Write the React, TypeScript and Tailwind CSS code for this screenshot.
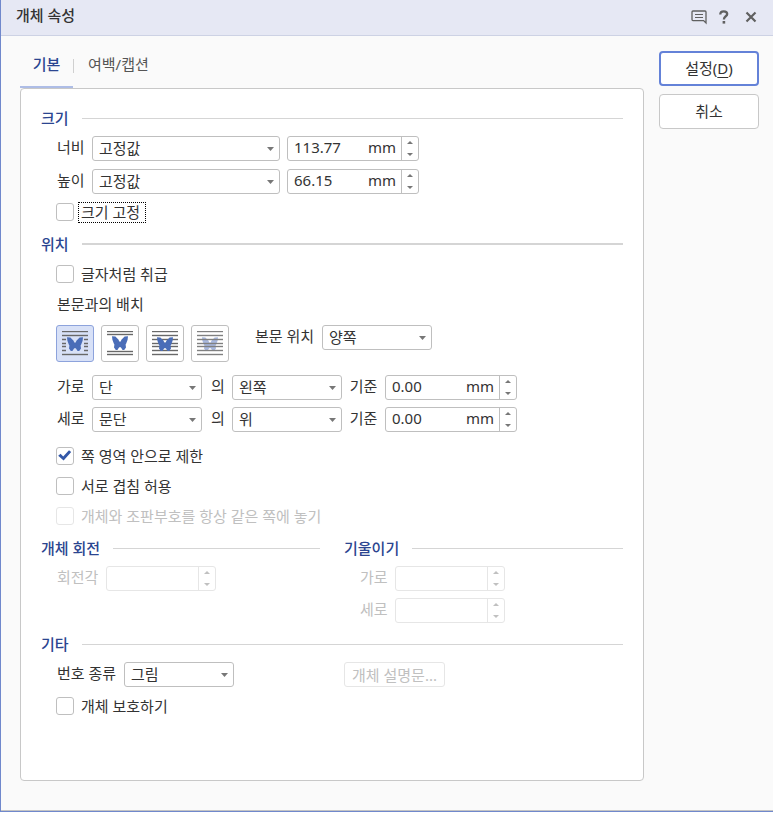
/**
 * App.tsx
 * --------------------------------------------------
 * 개체 속성 대화 상자 (기본 탭)
 */
import { useId, useState } from 'react';
import type { ReactNode } from 'react';
import clsx from 'clsx';

const WRAP_MODES = ['어울림', '자리 차지', '글 앞으로', '글 뒤로'];

function SectionTitle({ children, thick }: { children: ReactNode; thick?: boolean }) {
  return (
    <div className="flex items-center gap-[13px] h-5">
      <h2 className="font-medium text-[#2b4590] whitespace-nowrap">{children}</h2>
      <div className={clsx('flex-1 bg-[#d5d5d5]', thick ? 'h-0.5' : 'h-px')} />
    </div>
  );
}

function Row({ children }: { children: ReactNode }) {
  return <div className="flex items-start pl-4 leading-[23px]">{children}</div>;
}

function SelectBox({ id, value, label, className }: { id?: string; value: string; label?: string; className: string }) {
  return (
    <div className={clsx('relative h-[25px]', className)}>
      <select
        id={id}
        aria-label={label}
        className="w-full h-full appearance-none bg-white border border-[#bfbfbf] rounded-[3px] pl-1.5 pr-5 pb-px leading-[22px] outline-none"
      >
        <option>{value}</option>
      </select>
      <svg className="absolute right-[6px] top-[11px] pointer-events-none" width="7" height="4" viewBox="0 0 7 4">
        <path d="M0 0h7L3.5 4z" fill="#777" />
      </svg>
    </div>
  );
}

interface SpinBoxProps {
  id?: string;
  label?: string;
  value?: string;
  disabled?: boolean;
  className: string;
}

function SpinBox({ id, label, value = '', disabled, className }: SpinBoxProps) {
  const [text, setText] = useState(value);
  const step = (n: number) => setText((Number(text) + n).toFixed(2));

  return (
    <div
      className={clsx(
        'flex h-[25px] bg-white border rounded-[3px]',
        disabled ? 'border-[#e6e6e6] text-[#c0c0c0]' : 'border-[#bfbfbf] text-[#777]',
        className,
      )}
    >
      <input
        id={id}
        aria-label={label}
        type="text"
        value={text}
        disabled={disabled}
        onChange={(e) => setText(e.target.value)}
        className="flex-1 min-w-0 pl-1.5 pb-0.5 text-[#333] bg-transparent outline-none"
      />
      {!disabled && <span className="pr-[5px] leading-[21px] text-[#333]">mm</span>}
      <div className={clsx('flex flex-col w-[17px] border-l', disabled ? 'border-[#e6e6e6]' : 'border-[#bfbfbf]')}>
        <button type="button" aria-label="증가" disabled={disabled} onClick={() => step(1)} className="flex-1 flex items-center justify-center">
          <svg width="6" height="3" viewBox="0 0 6 3">
            <path d="M0 3h6L3 0z" fill="currentColor" />
          </svg>
        </button>
        <button type="button" aria-label="감소" disabled={disabled} onClick={() => step(-1)} className="flex-1 flex items-center justify-center">
          <svg width="6" height="3" viewBox="0 0 6 3">
            <path d="M0 0h6L3 3z" fill="currentColor" />
          </svg>
        </button>
      </div>
    </div>
  );
}

interface CheckProps {
  children: ReactNode;
  checked?: boolean;
  disabled?: boolean;
  focused?: boolean;
}

function Check({ children, checked, disabled, focused }: CheckProps) {
  const id = useId();
  return (
    <div className="flex items-center gap-1 h-5 pl-[15px]">
      <span className="grid shrink-0">
        <input
          id={id}
          type="checkbox"
          defaultChecked={checked}
          disabled={disabled}
          className={clsx(
            'peer col-start-1 row-start-1 appearance-none w-[18px] h-[18px] bg-white border rounded-[3px]',
            disabled ? 'border-[#e6e6e6]' : 'border-[#bfbfbf]',
          )}
        />
        <svg
          className="col-start-1 row-start-1 invisible peer-checked:visible pointer-events-none"
          width="18"
          height="18"
          viewBox="0 0 18 18"
        >
          <path d="M2.2 8.8L4.6 6.8l2.6 2.8L13 3.2l2.2 1.8-7.6 8.6z" fill="#3358a8" />
        </svg>
      </span>
      <label
        htmlFor={id}
        className={clsx(
          'pl-0.5 pr-[5px] border border-dotted leading-[19px]',
          focused ? 'border-black' : 'border-transparent',
          disabled && 'text-[#c0c0c0]',
        )}
      >
        {children}
      </label>
    </div>
  );
}

/* 나비 그림과 본문 줄로 배치 방식을 나타내는 아이콘 */
function WrapIcon({ mode }: { mode: number }) {
  const rows = mode === 1 ? [0, 3, 20, 23] : [0, 4, 8, 12, 15, 19, 23];
  const lines = rows.map((y) =>
    mode === 0 && y > 4 && y < 23 ? (
      <path key={y} d={`M0 ${y + 0.5}h4M22 ${y + 0.5}h4`} />
    ) : (
      <path key={y} d={`M0 ${y + 0.5}h26`} />
    ),
  );
  const butterfly = (
    <path
      transform={mode === 1 ? 'translate(0 -1)' : undefined}
      d="M5 6.2L8.4 6.6L11.6 9.8L12.2 11.4H13.8L14.4 9.8L17.6 6.6L21 6.2L20.6 9.8L19.2 13.4L18.6 14.4L19 17.4L17.2 20H15.6L13.8 17.2H12.2L10.4 20H8.8L7 17.4L7.4 14.4L6.8 13.4L5.4 9.8z"
      fill={mode === 3 ? '#a9b9df' : '#4a6db8'}
    />
  );
  return (
    <svg width="26" height="25" viewBox="0 0 26 25">
      {mode === 3 && butterfly}
      <g stroke={mode === 3 ? '#808080' : '#686868'} strokeWidth="1.4">{lines}</g>
      {mode !== 3 && butterfly}
    </svg>
  );
}

function TitleBar() {
  return (
    <header className="flex items-center justify-between h-9 pl-[15px] pr-4 bg-[#e6e8f4] border-b border-[#cdd2e4]">
      <h1 className="font-medium leading-5 pb-1.5">개체 속성</h1>
      <div className="flex items-center gap-3 pb-px text-[#606060]">
        <button type="button" aria-label="의견 보내기">
          <svg width="16" height="16" viewBox="0 0 16 16" fill="none" stroke="currentColor">
            <path d="M2 2h12a1 1 0 0 1 1 1v11l-2.4-2.4H2a1 1 0 0 1-1-1V3a1 1 0 0 1 1-1z" strokeWidth="1.3" />
            <path d="M4 5.5h8M4 8.5h8" strokeWidth="1.2" />
          </svg>
        </button>
        <button type="button" aria-label="도움말">
          <svg width="10" height="14" viewBox="0 0 10 14" fill="none" stroke="currentColor">
            <path d="M1.3 4.4C1.3 2.3 2.7 1.3 4.7 1.3S8.2 2.3 8.2 4C8.2 6.4 4.9 6.2 4.9 9.4" strokeWidth="2.3" />
            <path d="M3.6 11h2.6v2.6H3.6z" fill="currentColor" stroke="none" />
          </svg>
        </button>
        <button type="button" aria-label="닫기" className="pl-1">
          <svg width="12" height="12" viewBox="0 0 12 12" stroke="currentColor" strokeWidth="2.2">
            <path d="M1.5 1.5l9 9M10.5 1.5l-9 9" />
          </svg>
        </button>
      </div>
    </header>
  );
}

export default function App() {
  const [wrap, setWrap] = useState(0);

  return (
    <div className="bg-white text-[15px] leading-5 text-[#333] font-['Noto_Sans','Noto_Sans_CJK_KR',sans-serif]">
      <div className="border-l border-b border-[#7088cc] bg-[#fafafa]">
        <TitleBar />

        <main className="flex gap-[15px] pl-[19px] pr-3.5 pb-[29px] border-b border-[#c4c4c4]">
          <div className="flex-1 min-w-0">
            <div role="tablist" className="flex items-center h-[52px]">
              <button
                type="button"
                role="tab"
                aria-selected="true"
                className="h-full w-[53px] pt-1.5 border-b-2 border-[#aebde6] font-medium text-[#2b4590]"
              >
                기본
              </button>
              <div className="w-px h-3.5 mt-2 bg-[#d0d0d0]" />
              <button type="button" role="tab" aria-selected="false" className="h-full pl-3.5 pt-1 text-[#555]">
                여백/캡션
              </button>
            </div>

            <div className="bg-white border border-[#c8c8c8] rounded px-5 pt-[19px] pb-16">
              <SectionTitle>크기</SectionTitle>
              <div className="flex flex-col gap-2 mt-2">
                <Row>
                  <label htmlFor="width-type" className="w-[35px]">너비</label>
                  <SelectBox id="width-type" value="고정값" className="w-[188px] mr-[7px]" />
                  <SpinBox label="너비 값" value="113.77" className="w-[132px]" />
                </Row>
                <Row>
                  <label htmlFor="height-type" className="w-[35px]">높이</label>
                  <SelectBox id="height-type" value="고정값" className="w-[188px] mr-[7px]" />
                  <SpinBox label="높이 값" value="66.15" className="w-[132px]" />
                </Row>
                <Check focused>크기 고정</Check>
              </div>

              <div className="mt-3">
                <SectionTitle thick>위치</SectionTitle>
              </div>
              <div className="flex flex-col gap-2.5 mt-2.5">
                <Check>글자처럼 취급</Check>
                <div className="pl-4">본문과의 배치</div>
              </div>
              <div className="flex items-start pl-[15px] mt-[11px]">
                <div className="flex gap-[7px]">
                  {WRAP_MODES.map((name, i) => (
                    <button
                      key={name}
                      type="button"
                      aria-label={name}
                      aria-pressed={wrap === i}
                      onClick={() => setWrap(i)}
                      className={clsx(
                        'flex items-center justify-center w-[38px] h-[37px] border rounded-[3px]',
                        wrap === i ? 'bg-[#d8e1f7] border-[#8da3dc]' : 'bg-white border-[#bfbfbf]',
                      )}
                    >
                      <WrapIcon mode={i} />
                    </button>
                  ))}
                </div>
                <label htmlFor="text-side" className="w-[67px] ml-[26px] leading-[23px]">본문 위치</label>
                <SelectBox id="text-side" value="양쪽" className="w-[110px]" />
              </div>

              <div className="flex flex-col gap-[7px] mt-[13px]">
                <Row>
                  <label htmlFor="h-base" className="w-[35px]">가로</label>
                  <SelectBox id="h-base" value="단" className="w-[110px]" />
                  <span className="w-[30px] pl-0.5 text-center">의</span>
                  <SelectBox label="가로 정렬" value="왼쪽" className="w-[110px]" />
                  <label htmlFor="h-offset" className="w-[43px] text-center">기준</label>
                  <SpinBox id="h-offset" value="0.00" className="w-[132px]" />
                </Row>
                <Row>
                  <label htmlFor="v-base" className="w-[35px]">세로</label>
                  <SelectBox id="v-base" value="문단" className="w-[110px]" />
                  <span className="w-[30px] pl-0.5 text-center">의</span>
                  <SelectBox label="세로 정렬" value="위" className="w-[110px]" />
                  <label htmlFor="v-offset" className="w-[43px] text-center">기준</label>
                  <SpinBox id="v-offset" value="0.00" className="w-[132px]" />
                </Row>
              </div>
              <div className="flex flex-col gap-2.5 mt-3.5">
                <Check checked>쪽 영역 안으로 제한</Check>
                <Check>서로 겹침 허용</Check>
                <Check disabled>개체와 조판부호를 항상 같은 쪽에 놓기</Check>
              </div>

              <div className="grid grid-cols-2 gap-6 mt-3">
                <div>
                  <SectionTitle>개체 회전</SectionTitle>
                  <div className="mt-2">
                    <Row>
                      <label htmlFor="rotate" className="w-[49px] text-[#c0c0c0]">회전각</label>
                      <SpinBox id="rotate" disabled className="w-[110px]" />
                    </Row>
                  </div>
                </div>
                <div>
                  <SectionTitle>기울이기</SectionTitle>
                  <div className="flex flex-col gap-[7px] mt-2">
                    <Row>
                      <label htmlFor="skew-x" className="w-[35px] text-[#c0c0c0]">가로</label>
                      <SpinBox id="skew-x" disabled className="w-[110px]" />
                    </Row>
                    <Row>
                      <label htmlFor="skew-y" className="w-[35px] text-[#c0c0c0]">세로</label>
                      <SpinBox id="skew-y" disabled className="w-[110px]" />
                    </Row>
                  </div>
                </div>
              </div>

              <div className="mt-[11px]">
                <SectionTitle>기타</SectionTitle>
              </div>
              <div className="grid grid-cols-2 gap-x-6 mt-2 mb-[9px]">
                <Row>
                  <label htmlFor="number-type" className="w-[67px]">번호 종류</label>
                  <SelectBox id="number-type" value="그림" className="w-[110px]" />
                </Row>
                <button
                  type="button"
                  disabled
                  className="w-[101px] h-[25px] border border-[#e6e6e6] rounded-[3px] text-[#c0c0c0]"
                >
                  개체 설명문...
                </button>
              </div>
              <Check>개체 보호하기</Check>
            </div>
          </div>

          <div className="flex flex-col gap-2 w-[100px] pt-[15px]">
            <button type="button" className="h-[35px] pb-0.5 bg-white border-2 border-[#6482d8] rounded">
              설정(<span className="underline underline-offset-3">D</span>)
            </button>
            <button type="button" className="h-[35px] pb-0.5 bg-white border border-[#c8c8c8] rounded">
              취소
            </button>
          </div>
        </main>
      </div>
    </div>
  );
}
